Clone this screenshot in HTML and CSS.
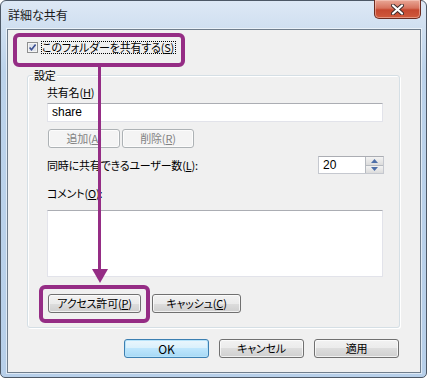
FILE: index.html
```html
<!DOCTYPE html>
<html>
<head>
<meta charset="utf-8" />
<title>詳細な共有</title>
<link rel="stylesheet" href="styles.css">
</head>
<body>
<!-- ********************* Dialog begin *********************** -->
<div class="window">
 <div class="titlebar">
  <span class="title">詳細な共有</span>
  <div class="close">
   <svg width="13" height="11" viewBox="0 0 13 11">
    <path d="M2 1.5 L11 9.5 M11 1.5 L2 9.5" stroke="#3a2a2a" stroke-width="4" stroke-linecap="round" fill="none"/>
    <path d="M2 1.5 L11 9.5 M11 1.5 L2 9.5" stroke="#fff" stroke-width="2.2" stroke-linecap="round" fill="none"/>
   </svg>
  </div>
 </div>

 <div class="client">
  <div class="checkRow">
   <span class="checkbox">
    <svg width="11" height="11" viewBox="0 0 11 11">
     <rect x="0.5" y="0.5" width="10" height="10" fill="#f4f4f4" stroke="#8e8f8f"/>
     <rect x="2" y="2" width="7" height="7" fill="#dfe3ea"/>
     <path d="M2.6 5.4 L4.5 7.8 L8.6 2.6" stroke="#3b4f91" stroke-width="1.6" fill="none"/>
    </svg>
   </span>
   <span class="focusText">このフォルダーを共有する(<u>S</u>)</span>
  </div>

  <div class="group">
   <div class="groupTitle">設定</div>
   <div class="label">共有名(<u>H</u>)</div>
   <div class="textbox">share</div>
   <div class="buttonRow">
    <button class="btn btnSmall" disabled>追加(<u>A</u>)</button>
    <button class="btn btnSmall" disabled>削除(<u>R</u>)</button>
   </div>
   <div class="usersRow">
    <span>同時に共有できるユーザー数(<u>L</u>):</span>
    <div class="spin">
     <span class="spinValue">20</span>
     <div class="spinButtons">
      <div class="spinBtn"><svg width="7" height="4" viewBox="0 0 7 4"><path d="M0 4 L3.5 0 L7 4 Z" fill="#4d6ea8"/></svg></div>
      <div class="spinBtn"><svg width="7" height="4" viewBox="0 0 7 4"><path d="M0 0 L3.5 4 L7 0 Z" fill="#4d6ea8"/></svg></div>
     </div>
    </div>
   </div>
   <div class="label labelComment">コメント(<u>O</u>):</div>
   <div class="textarea"></div>
   <div class="buttonRow buttonRowAccess">
    <button class="btn btnAccess">アクセス許可(<u>P</u>)</button>
    <button class="btn btnCache">キャッシュ(<u>C</u>)</button>
   </div>
  </div>

  <div class="dialogButtons">
   <button class="btn btnDialog btnDefault">OK</button>
   <button class="btn btnDialog">キャンセル</button>
   <button class="btn btnDialog">適用</button>
  </div>
 </div>

 <!-- annotation marks over the dialog -->
 <div class="mark markCheck"></div>
 <div class="mark markAccess"></div>
 <div class="arrowLine"></div>
 <div class="arrowHead"></div>
</div>
<!-- ********************* Dialog end *********************** -->
</body>
</html>
```

FILE: styles.css
```css
body {
margin:0; background-color:#fff;
font-family: "Noto Sans CJK JP", "Liberation Sans", sans-serif; font-size:11px; color:#000;
font-feature-settings: "palt"; letter-spacing:-0.2px;
}
.window {
position:relative; box-sizing:border-box;
width:427px; height:378px;
border:1px solid #4d5866; border-radius:6px 6px 5px 5px;
padding:0 5px 4px 6px;
display:flex; flex-direction:column;
background: linear-gradient(to bottom, #dde8f5 0, #cfdff0 28px, #bcd3eb 70px, #b7cfe9 100%);
}
.titlebar {
height:28px; display:flex; align-items:flex-start; justify-content:space-between;
}
.title {
padding:7px 0 0 1px; font-size:12px; line-height:14px; color:#1a1a1a; letter-spacing:0;
}
.close {
margin-top:-1px; width:47px; height:19px; box-sizing:border-box;
border:1px solid #6b2b20; border-top:none; border-radius:0 0 5px 5px;
background: linear-gradient(to bottom, #e9a897 0, #d7735e 45%, #c5472f 55%, #cf5a3c 100%);
box-shadow: inset 0 0 0 1px rgba(255,220,210,.45);
display:flex; align-items:center; justify-content:center;
}
.client {
flex:1; background-color:#f0f0f0;
border:1px solid #6f7d8c;
box-shadow: 0 0 0 1px rgba(255,255,255,.55);
padding:0 20px 0 19px;
}

/* ---------------- share checkbox */
.checkRow {
margin-top:11px; height:13px; display:flex; align-items:center;
}
.checkbox { width:11px; height:11px; display:block; margin-right:3px; }
.checkbox svg { display:block; }
.focusText {
border:1px dotted #000; line-height:11px; height:11px; padding:0 1px 0 0;
}

/* ---------------- group box */
.group {
margin-top:21px; border:1px solid #d5dfe5; border-radius:3px;
box-shadow: inset 1px 1px 0 #fff, 1px 1px 0 #fff;
padding:0 16px 14px 19px;
}
.groupTitle {
width:fit-content; margin:-8px 0 0 -14px; padding:0 1px;
line-height:14px; background-color:#f0f0f0;
}
.label { margin-top:3px; line-height:14px; }
.labelComment { margin-top:12px; }
.textbox {
margin-top:4px; height:19px; box-sizing:border-box;
border:1px solid #e2e3ea; border-top-color:#abadb3;
background-color:#fff; padding:0 4px; line-height:17px;
font-family: "Liberation Sans", sans-serif; font-size:12px; letter-spacing:0;
}
.buttonRow { margin-top:7px; display:flex; gap:2px; padding-left:1px; }
.buttonRowAccess { margin-top:17px; gap:11px; }
.usersRow {
margin-top:8px; height:18px; display:flex; align-items:center; justify-content:space-between;
}
.spin {
width:66px; height:18px; box-sizing:border-box; margin-right:-1px;
border:1px solid #c5c8cf; border-top-color:#abadb3;
background-color:#fff; display:flex; justify-content:space-between;
}
.spinValue { padding-left:4px; line-height:16px; font-family: "Liberation Sans", sans-serif; font-size:12px; letter-spacing:0; }
.spinButtons { width:17px; display:flex; flex-direction:column; border-left:1px solid #b6bac0; }
.spinBtn {
flex:1; display:flex; align-items:center; justify-content:center;
background: linear-gradient(to bottom, #f3f3f3, #dcdcdc);
border-bottom:1px solid #b6bac0;
}
.spinBtn:last-child { border-bottom:none; }
.spinBtn svg { display:block; }
.textarea {
margin-top:10px; height:67px; box-sizing:border-box;
border:1px solid #e2e3ea; border-top-color:#abadb3; background-color:#fff;
}

/* ---------------- buttons */
.btn {
height:19px; box-sizing:border-box; padding:0;
border:1px solid #707070; border-radius:3px;
background: linear-gradient(to bottom, #f2f2f2 0, #ebebeb 50%, #dddddd 50%, #cfcfcf 100%);
box-shadow: inset 0 0 0 1px rgba(255,255,255,.7);
font-family: "Noto Sans CJK JP", "Liberation Sans", sans-serif; font-size:11px; color:#000;
font-feature-settings: "palt"; letter-spacing:-0.2px; line-height:15px;
}
.btn:disabled {
border-color:#adb2b5; background:#f4f4f4; color:#838383;
}
.btnSmall { width:72px; }
.btnAccess { width:93px; }
.btnCache { width:89px; }
.dialogButtons {
margin-top:11px; display:flex; justify-content:flex-end; gap:10px; padding-right:1px;
}
.btnDialog { width:85px; }
.btnDefault {
border-color:#3c7fb1;
background: linear-gradient(to bottom, #eaf6fd 0, #d9f0fc 50%, #bee6fd 50%, #a7d9f5 100%);
box-shadow: inset 0 0 0 1px #b7e3fa;
font-size:12px; letter-spacing:0;
}

/* ---------------- annotation */
.mark {
position:absolute; box-sizing:border-box;
border:4px solid #952d85; border-radius:6px;
}
.markCheck { left:12px; top:32px; width:172px; height:34px; }
.markAccess { left:38px; top:284px; width:111px; height:38px; }
.arrowLine {
position:absolute; left:97px; top:65px; width:3px; height:206px; background-color:#952d85;
}
.arrowHead {
position:absolute; left:91px; top:268px; width:0; height:0;
border-left:8px solid transparent; border-right:8px solid transparent;
border-top:14px solid #952d85;
}
```
